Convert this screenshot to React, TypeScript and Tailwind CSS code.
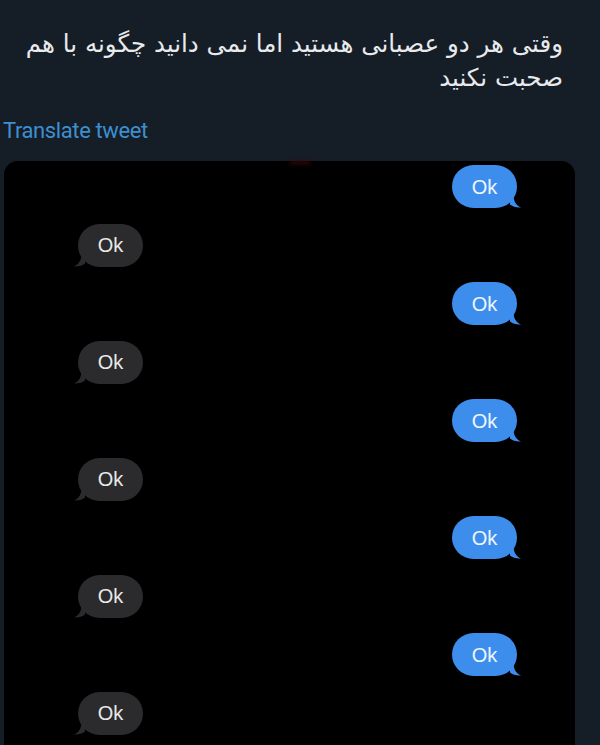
import React from "react";

const messages = [
  "me", "them", "me", "them", "me", "them", "me", "them", "me", "them",
];

const Tail = ({ side, color }: { side: "left" | "right"; color: string }) => {
  // little curl at the bottom corner of an iMessage bubble
  if (side === "right") {
    return (
      <svg
        className="absolute -right-[5px] bottom-0"
        width="12"
        height="14"
        viewBox="0 0 14 16"
      >
        <path d="M0 0 H4 C4 8 7 13 13 15.5 C8 16 3 14.5 0 12 Z" fill={color} />
      </svg>
    );
  }
  return (
    <svg
      className="absolute -left-[5px] bottom-0"
      width="12"
      height="14"
      viewBox="0 0 14 16"
    >
      <path d="M14 0 H10 C10 8 7 13 1 15.5 C6 16 11 14.5 14 12 Z" fill={color} />
    </svg>
  );
};

const Bubble = ({ from }: { from: string }) => {
  const mine = from === "me";
  return (
    <div className={`flex h-[43px] ${mine ? "justify-end pr-[58px]" : "justify-start pl-[74px]"}`}>
      <div
        className={`relative flex h-[43px] w-[65px] items-center justify-center rounded-[22px] ${
          mine ? "bg-[#3d8eec] text-[#eef6ff]" : "bg-[#2b2b2d] text-[#e9e9e9]"
        }`}
      >
        <span className="text-[20px] leading-none" style={{ fontFamily: '"Liberation Sans", Arial, sans-serif' }}>
          Ok
        </span>
        <Tail side={mine ? "right" : "left"} color={mine ? "#3d8eec" : "#2b2b2d"} />
      </div>
    </div>
  );
};

export default function App() {
  return (
    <div className="w-[600px] h-[745px] overflow-hidden bg-[#151d27]">
      <div
        dir="rtl"
        className="pt-[27px] pr-[37px] text-[24.5px] leading-[34px] text-[#e8eaec]"
        style={{ fontFamily: '"DejaVu Sans", "Noto Sans", sans-serif' }}
      >
        <p>وقتی هر دو عصبانی هستید اما نمی دانید چگونه با هم</p>
        <p>صحبت نکنید</p>
      </div>

      <div className="mt-[22px] pl-[3px] leading-[28px]">
        <span
          className="text-[22px] text-[#3e8fd0] tracking-[-0.4px]"
          style={{ fontFamily: "Roboto, Arial, sans-serif" }}
        >
          Translate tweet
        </span>
      </div>

      <div className="relative ml-[4px] mt-[15px] w-[571px] h-[600px] rounded-t-[14px] bg-black">
        <div className="absolute left-[285px] top-0 h-[3px] w-[22px] rounded-full bg-[#3a0a08] blur-[2px]" />
        <div className="flex flex-col gap-[15.5px] pt-[4px]">
          {messages.map((m, i) => (
            <Bubble key={i} from={m} />
          ))}
        </div>
      </div>
    </div>
  );
}
